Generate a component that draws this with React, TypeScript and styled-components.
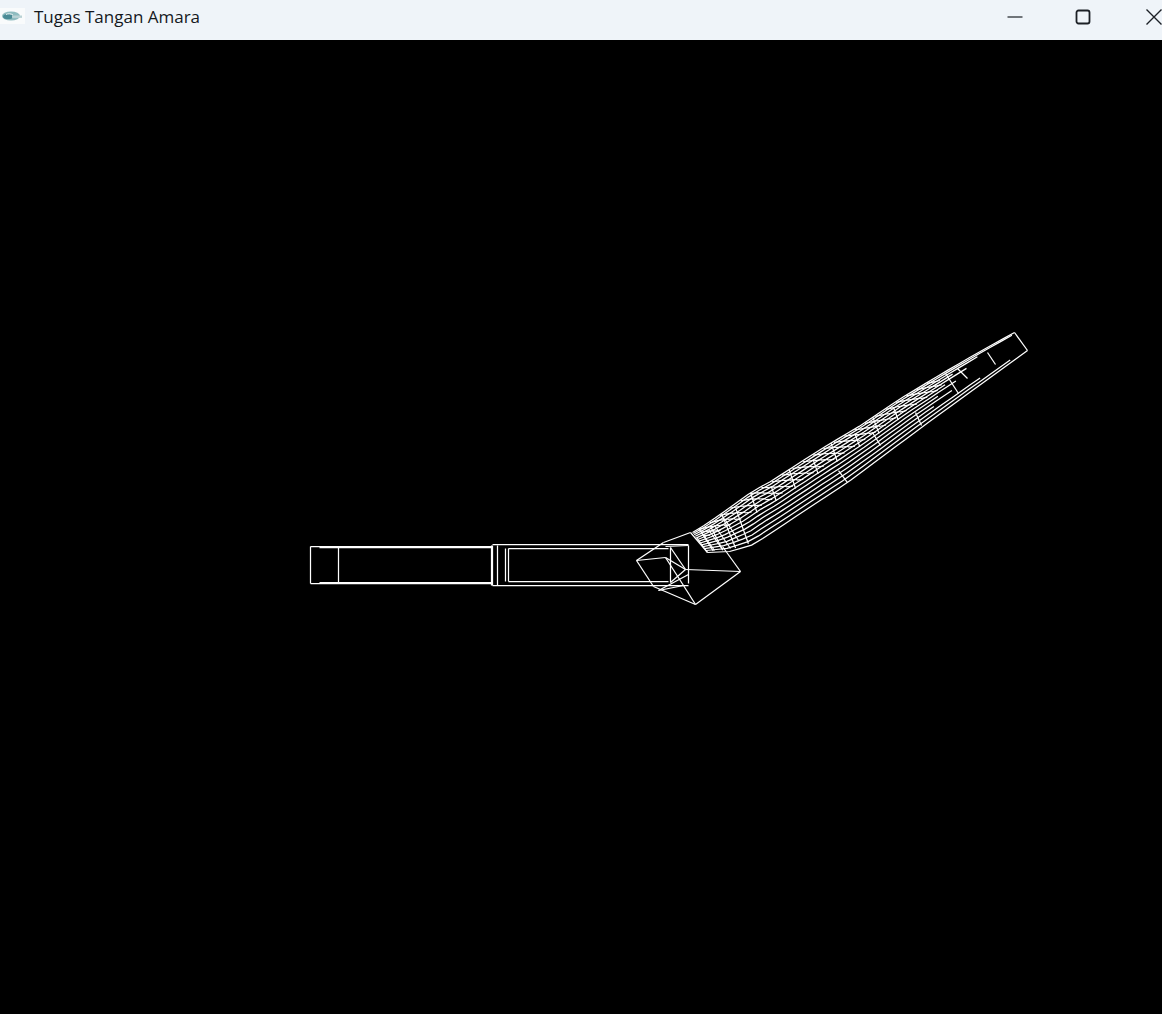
import React from 'react';
import styled, { createGlobalStyle } from 'styled-components';

const GlobalStyle = createGlobalStyle`
  html, body {
    margin: 0;
    padding: 0;
    height: 100%;
    overflow: hidden;
    background: #000;
  }
  #root {
    height: 100%;
  }
`;

const Window = styled.div`
  display: flex;
  flex-direction: column;
  width: 1162px;
  height: 1014px;
  overflow: hidden;
`;

const TitleBar = styled.header`
  display: flex;
  align-items: center;
  flex: 0 0 40px;
  height: 40px;
  padding-bottom: 6px;
  box-sizing: border-box;
  background: #eff4f9;
`;

const AppIcon = styled.svg`
  display: block;
  flex: none;
  width: 25px;
  height: 16px;
  margin: 0 9px 2px 0;
`;

const Title = styled.h1`
  flex: 1;
  margin: 0;
  font-family: "Open Sans", "Liberation Sans", sans-serif;
  font-size: 17px;
  font-weight: 400;
  line-height: 24px;
  color: #14181d;
`;

const Controls = styled.div`
  display: flex;
  flex: none;
  align-items: center;
  width: 155px;
  height: 34px;
`;

const ControlIcon = styled.svg`
  display: block;
  flex: none;
  width: 16px;
  height: 16px;
  fill: none;
  stroke: #1c2026;
  stroke-width: 1.2;
`;

const MinimizeIcon = styled(ControlIcon)`
  margin-left: 0;
`;

const MaximizeIcon = styled(ControlIcon)`
  margin-left: 52px;
  stroke-width: 1.8;
`;

const CloseIcon = styled(ControlIcon)`
  margin-left: 55px;
  stroke-width: 1.4;
`;

const Viewport = styled.main`
  flex: 1;
  min-height: 0;
  background: #000;
`;

const Wireframe = styled.svg`
  display: block;
  width: 100%;
  height: 100%;
  fill: none;
  stroke: #fff;
  stroke-width: 1.25;
`;

type Pt = [number, number];

const lerp = (a: Pt, b: Pt, t: number): Pt => [a[0] + (b[0] - a[0]) * t, a[1] + (b[1] - a[1]) * t];

// point along a polyline, t in 0..1 over its x span
const along = (line: Pt[], t: number): Pt => {
  const x = line[0][0] + (line[line.length - 1][0] - line[0][0]) * t;
  for (let i = 0; i < line.length - 1; i++) {
    if (x <= line[i + 1][0]) {
      return lerp(line[i], line[i + 1], (x - line[i][0]) / (line[i + 1][0] - line[i][0]));
    }
  }
  return line[line.length - 1];
};

const upperEdge: Pt[] = [[692, 532], [707, 523], [753, 490], [767, 483], [823, 447], [860, 425], [900, 398], [950, 368], [985, 348], [1014, 332]];
const lowerEdge: Pt[] = [[707, 552], [730, 551], [753, 544], [847, 482], [925, 424], [1027, 350]];

const at = (t: number, s: number) => lerp(along(upperEdge, t), along(lowerEdge, t), s);

const armLines: [number, number, number, number][] = [
  [310, 546, 492, 546], [319, 547, 492, 547], [310, 583, 492, 583], [319, 582, 492, 582],
  [310, 546, 310, 583], [338, 547, 338, 582],
  [491, 545, 491, 585], [492, 545, 492, 585], [497, 545, 497, 585], [505, 548, 505, 581], [508, 548, 508, 581],
  [492, 544, 688, 544], [492, 585, 688, 585], [508, 548, 668, 548], [508, 581, 668, 581],
];

const elbowLines: [number, number, number, number][] = [
  [636, 560, 663, 542], [663, 542, 690, 532], [636, 560, 665, 557], [665, 557, 685, 569],
  [685, 569, 740, 571], [740, 571, 695, 604], [695, 604, 653, 586], [653, 586, 636, 560],
  [688, 545, 688, 583], [670, 547, 670, 582], [665, 546, 688, 545], [665, 557, 683, 585],
  [685, 569, 670, 582], [683, 585, 695, 604], [683, 585, 658, 590], [670, 547, 685, 569],
  [658, 590, 688, 574], [707, 552, 690, 532], [740, 571, 722, 546],
];

// hand-placed bits of the finger tips and the short finger's end
const tipLines: [number, number, number, number][] = [
  [1014, 332, 1027, 350], [987, 352, 995, 364], [957, 368, 967, 378], [945, 373, 958, 393],
  [847, 482, 838, 470], [921, 425, 915, 412], [880, 445, 872, 432],
  [696, 537, 707, 552], [702, 533, 714, 550], [708, 529, 722, 549], [714, 525, 730, 548], [724, 518, 738, 540],
];

// reach of each strand: the outer ones run out to the tip, the inner fingers stop short
const reaches = [1, 0.99, 0.88, 0.8, 0.84, 0.77, 0.8, 0.74, 0.78, 0.72, 0.86, 0.95, 1];

const strands = reaches.map((reach, i) => {
  const s = Math.pow(i / (reaches.length - 1), 1.2);
  return Array.from({ length: 30 }, (_, j) => at((j / 29) * reach, s));
});

const struts = [0.02, 0.05, 0.09, 0.13, 0.18, 0.24, 0.3, 0.37, 0.43, 0.5, 0.56, 0.62].map((t, i) => {
  const to = t < 0.14 ? 0.95 : 0.45;
  return [at(t, i % 2 === 0 ? 0 : 0.1), at(t, to)];
});

// zigzag mesh along the back of the hand, this gives the dense white part
const mesh: Pt[][] = [];
for (let j = 0; j < 46; j++) {
  const t = 0.02 + (j / 46) * 0.74;
  [0.02, 0.08, 0.15, 0.22, 0.3].forEach((s, k) => {
    if ((j + k) % 2 === 0) mesh.push([at(t, s), at(t + 0.018, s + 0.07)]);
  });
}

const toPoints = (line: Pt[]) => line.map(([x, y]) => `${x.toFixed(1)},${y.toFixed(1)}`).join(' ');

const App = () => (
  <>
    <GlobalStyle />
    <Window>
      <TitleBar>
        <AppIcon viewBox="0 0 25 16">
          <rect width="25" height="16" fill="#f9fbfc" />
          <ellipse cx="11" cy="8" rx="9" ry="4.5" fill="#8fbcc0" />
          <ellipse cx="8" cy="8.5" rx="5" ry="2.6" fill="#4a8b96" />
          <path d="M12 7.5h10v2.4h-10z" fill="#b9d2d5" />
          <path d="M6 6.5c2-1 5-1 7 .5" stroke="#eaf2f3" strokeWidth="1" fill="none" />
        </AppIcon>
        <Title>Tugas Tangan Amara</Title>
        <Controls>
          <MinimizeIcon viewBox="0 0 16 16">
            <path d="M0.5 8h15" />
          </MinimizeIcon>
          <MaximizeIcon viewBox="0 0 16 16">
            <rect x="1.5" y="1.5" width="13" height="13" rx="2" />
          </MaximizeIcon>
          <CloseIcon viewBox="0 0 16 16">
            <path d="M0.5 0.5l15 15M15.5 0.5l-15 15" />
          </CloseIcon>
        </Controls>
      </TitleBar>
      <Viewport>
        <Wireframe viewBox="-0.5 39.5 1162 974">
          {armLines.concat(elbowLines, tipLines).map(([x1, y1, x2, y2], i) => (
            <line key={i} x1={x1} y1={y1} x2={x2} y2={y2} />
          ))}
          {strands.map((line, i) => (
            <polyline key={i} points={toPoints(line)} />
          ))}
          {struts.concat(mesh).map((line, i) => (
            <polyline key={i} points={toPoints(line)} />
          ))}
        </Wireframe>
      </Viewport>
    </Window>
  </>
);

export default App;
